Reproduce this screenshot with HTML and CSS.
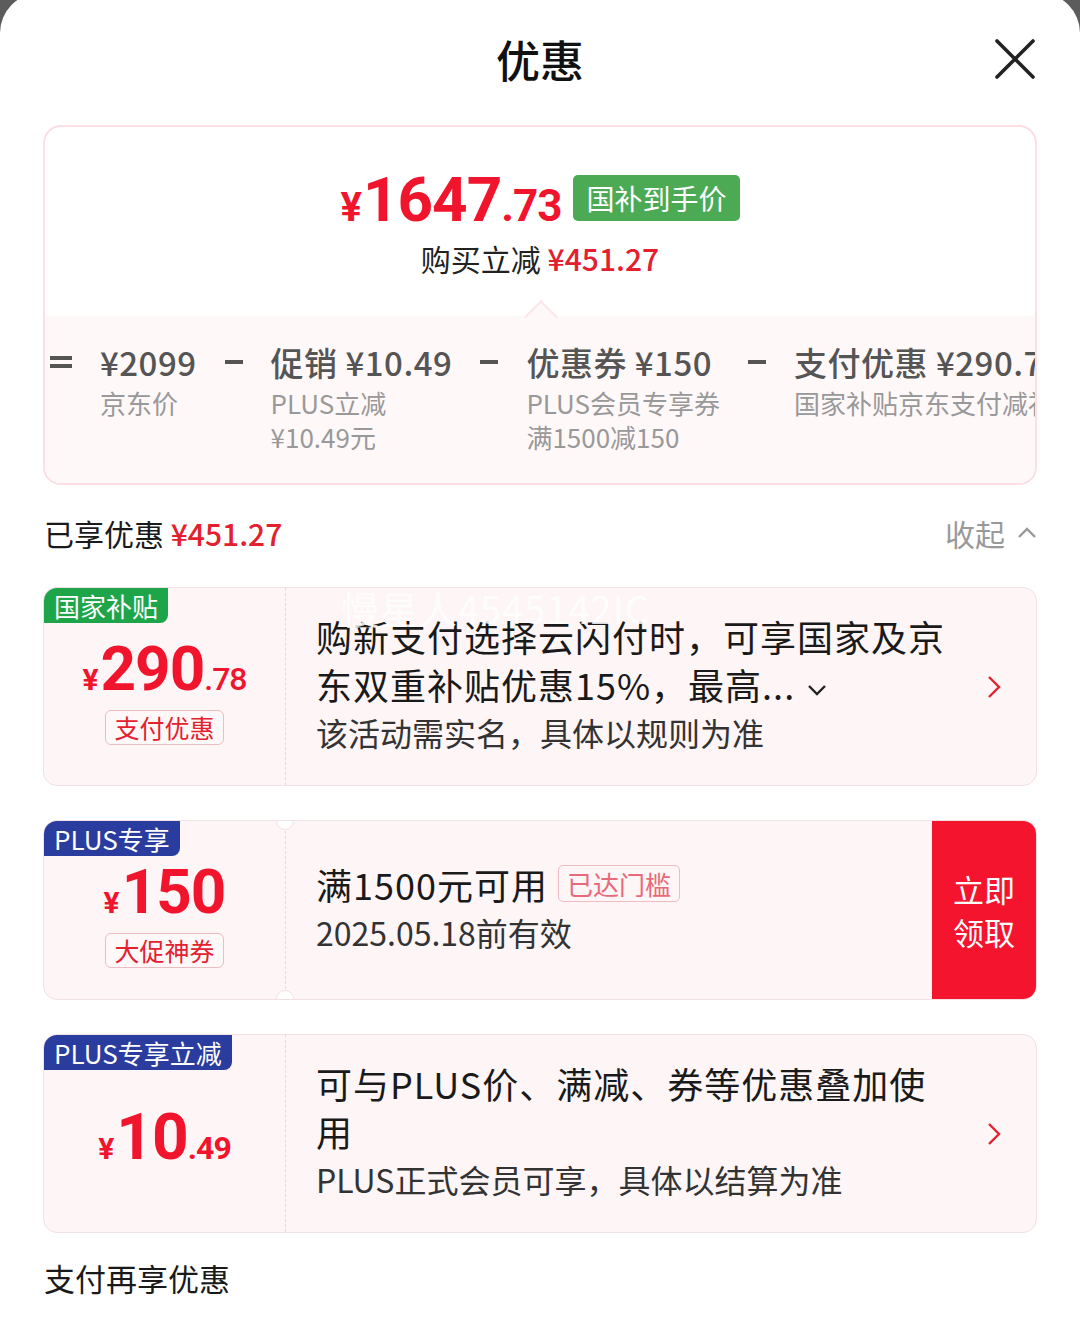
FILE: index.html
```html
<!DOCTYPE html>
<html lang="zh-CN">
<head>
    <meta charset="UTF-8">
    <meta name="viewport" content="width=device-width, initial-scale=1.0">
    <title>优惠</title>
    <link rel="stylesheet" href="styles.css">
</head>
<body>

<div class="sheet">

    <header class="head">
        <span></span>
        <h1>优惠</h1>
        <svg class="close" width="40" height="40" viewBox="0 0 40 40">
            <path d="M2 2 L38 38 M38 2 L2 38" stroke="#222" stroke-width="3.6" fill="none" stroke-linecap="round"/>
        </svg>
    </header>

    <section class="summary">
        <div class="summary-top">
            <div class="final">
                <span class="num"><span class="y">¥</span><span class="i">1647</span><span class="d">.73</span></span>
                <span class="badge-green">国补到手价</span>
            </div>
            <div class="saved">购买立减 <em>¥451.27</em></div>
        </div>
        <div class="summary-bottom">
            <div class="calc">
                <span class="op-eq"></span>
                <div class="term">
                    <div class="term-main">¥2099</div>
                    <div class="term-sub">京东价</div>
                </div>
                <span class="op-minus"></span>
                <div class="term">
                    <div class="term-main">促销 ¥10.49</div>
                    <div class="term-sub">PLUS立减</div>
                    <div class="term-sub">¥10.49元</div>
                </div>
                <span class="op-minus"></span>
                <div class="term">
                    <div class="term-main">优惠券 ¥150</div>
                    <div class="term-sub">PLUS会员专享券</div>
                    <div class="term-sub">满1500减150</div>
                </div>
                <span class="op-minus"></span>
                <div class="term">
                    <div class="term-main">支付优惠 ¥290.78</div>
                    <div class="term-sub">国家补贴京东支付减补</div>
                </div>
            </div>
        </div>
    </section>

    <div class="enjoyed">
        <div class="enjoyed-title">已享优惠 <em>¥451.27</em></div>
        <div class="fold">收起
            <svg width="20" height="12" viewBox="0 0 20 12"><path d="M2 10 L10 2 L18 10" stroke="#999" stroke-width="2.4" fill="none"/></svg>
        </div>
    </div>

    <div class="list">

        <div class="coupon coupon-tall">
            <span class="flag flag-green">国家补贴</span>
            <span class="watermark">慢星人4545142IC</span>
            <div class="c-left">
                <div class="amount"><span class="y">¥</span><span class="i">290</span><span class="d">.78</span></div>
                <span class="tag">支付优惠</span>
            </div>
            <div class="c-body">
                <div class="c-title">购新支付选择云闪付时，可享国家及京东双重补贴优惠15%，最高...<svg class="more-down" width="20" height="12" viewBox="0 0 20 12"><path d="M2 2 L10 10 L18 2" stroke="#222" stroke-width="2.4" fill="none"/></svg></div>
                <div class="c-sub">该活动需实名，具体以规则为准</div>
            </div>
            <div class="c-arrow">
                <svg width="14" height="24" viewBox="0 0 14 24"><path d="M2 2 L12 12 L2 22" stroke="#e3212f" stroke-width="2.4" fill="none"/></svg>
            </div>
        </div>

        <div class="coupon coupon-short">
            <span class="flag flag-navy">PLUS专享</span>
            <div class="c-left c-left-notch">
                <div class="amount"><span class="y">¥</span><span class="i">150</span></div>
                <span class="tag">大促神券</span>
            </div>
            <div class="c-body">
                <div class="c-title">满1500元可用<span class="tag-light">已达门槛</span></div>
                <div class="c-sub">2025.05.18前有效</div>
            </div>
            <div class="c-btn">立即<br>领取</div>
        </div>

        <div class="coupon coupon-tall">
            <span class="flag flag-navy">PLUS专享立减</span>
            <div class="c-left">
                <div class="amount amount-bold"><span class="y">¥</span><span class="i">10</span><span class="d">.49</span></div>
            </div>
            <div class="c-body">
                <div class="c-title">可与PLUS价、满减、券等优惠叠加使用</div>
                <div class="c-sub">PLUS正式会员可享，具体以结算为准</div>
            </div>
            <div class="c-arrow">
                <svg width="14" height="24" viewBox="0 0 14 24"><path d="M2 2 L12 12 L2 22" stroke="#e3212f" stroke-width="2.4" fill="none"/></svg>
            </div>
        </div>

    </div>

    <div class="more">支付再享优惠</div>

</div>

</body>
</html>
```

FILE: styles.css
```css
* {
    box-sizing: border-box;
}

body {
    margin: 0;
    background-color: #5c5c5c;
    font-family: "Noto Sans CJK SC", "Noto Sans", sans-serif;
    color: #1a1a1a;
    overflow: hidden;
}

em {
    font-style: normal;
}

.sheet {
    margin-top: -7px;
    background: #fff;
    border-radius: 40px 40px 0 0;
    min-height: 1340px;
}

.head {
    height: 132px;
    display: grid;
    grid-template-columns: 1fr auto 1fr;
    align-items: center;
}

.head h1 {
    margin: 0;
    font-size: 44px;
    font-weight: 500;
    color: #111;
}

.close {
    justify-self: end;
    margin-right: 45px;
}

/* summary card */
.summary {
    margin: 0 43px;
    border: 2px solid #fbdfe5;
    border-radius: 18px;
    overflow: hidden;
}

.summary-top {
    height: 189px;
    padding-top: 42px;
    text-align: center;
}

.final {
    display: flex;
    justify-content: center;
    align-items: center;
}

.num {
    display: inline-flex;
    align-items: baseline;
    font-family: Roboto, "Noto Sans", sans-serif;
    font-weight: 700;
    color: #f0142c;
    line-height: 1;
    letter-spacing: -1px;
}

.num .y {
    font-size: 40px;
    margin-right: 2px;
}

.num .i {
    font-size: 62px;
}

.num .d {
    font-size: 44px;
}

.badge-green {
    margin-left: 12px;
    margin-bottom: 4px;
    background: #4caa55;
    color: #fff;
    font-size: 28px;
    line-height: 46px;
    padding: 0 13px;
    border-radius: 5px;
}

.saved {
    margin-top: 7px;
    font-size: 30px;
    line-height: 40px;
    color: #222;
}

.saved em {
    color: #e4202f;
    font-weight: 500;
}

.summary-bottom {
    position: relative;
    height: 167px;
    background: #fff8f9;
    padding: 24px 0 0 5px;
}

.summary-bottom::before {
    content: "";
    position: absolute;
    top: -11px;
    left: calc(50% - 11px);
    width: 22px;
    height: 22px;
    background: #fff8f9;
    border-top: 2px solid #fde6ea;
    border-left: 2px solid #fde6ea;
    transform: rotate(45deg);
}

.calc {
    display: flex;
    gap: 28px;
    white-space: nowrap;
}

.op-eq {
    flex: none;
    width: 22px;
    height: 12px;
    margin-top: 16px;
    border-top: 4px solid #555;
    border-bottom: 4px solid #555;
}

.op-minus {
    flex: none;
    width: 18px;
    height: 4px;
    margin-top: 20px;
    background: #555;
}

.term {
    flex: none;
}

.term-main {
    font-size: 33px;
    line-height: 44px;
    font-weight: 500;
    letter-spacing: 0.5px;
    color: #555;
}

.term-sub {
    font-size: 26px;
    line-height: 34px;
    color: #999;
}

.term-main + .term-sub {
    margin-top: 2px;
}

/* enjoyed row */
.enjoyed {
    display: flex;
    justify-content: space-between;
    align-items: center;
    height: 40px;
    margin: 28px 43px 34px 44px;
}

.enjoyed-title {
    font-size: 30px;
    color: #1a1a1a;
}

.enjoyed-title em {
    color: #e4202f;
    font-weight: 500;
}

.fold {
    display: flex;
    align-items: center;
    gap: 12px;
    font-size: 30px;
    color: #999;
}

/* coupons */
.list {
    display: flex;
    flex-direction: column;
    gap: 34px;
    margin: 0 43px;
}

.coupon {
    position: relative;
    display: flex;
    background: #fdf5f6;
    border: 1px solid #f1e1e4;
    border-radius: 14px;
    overflow: hidden;
}

.coupon-tall {
    height: 199px;
}

.coupon-short {
    height: 180px;
}

.flag {
    position: absolute;
    top: 0;
    left: 0;
    z-index: 2;
    color: #fff;
    font-size: 26px;
    line-height: 35px;
    padding: 0 10px;
    border-radius: 0 0 8px 0;
}

.flag-green {
    background: #1ea54a;
}

.flag-navy {
    background: #2a3c9e;
}

.watermark {
    position: absolute;
    top: 0;
    left: 297px;
    font-size: 38px;
    line-height: 40px;
    color: rgba(255, 255, 255, 0.85);
    letter-spacing: 1px;
    z-index: 2;
}

.c-left {
    position: relative;
    flex: none;
    width: 242px;
    border-right: 1px dashed #f3d5da;
    display: flex;
    flex-direction: column;
    align-items: center;
    justify-content: center;
    padding-top: 9px;
}

.c-left-notch::before,
.c-left-notch::after {
    content: "";
    position: absolute;
    right: -9px;
    width: 16px;
    height: 16px;
    border-radius: 50%;
    background: #fff;
    border: 1px solid #f1e1e4;
}

.c-left-notch::before {
    top: -9px;
}

.c-left-notch::after {
    bottom: -9px;
}

.amount {
    display: flex;
    align-items: baseline;
    font-family: Roboto, "Noto Sans", sans-serif;
    font-weight: 700;
    color: #f0142c;
    line-height: 1;
    letter-spacing: -1px;
}

.amount .y {
    font-size: 30px;
    margin-right: 3px;
}

.amount .i {
    font-size: 62px;
}

.amount .d {
    font-size: 32px;
    font-weight: 500;
}

.amount-bold .i {
    font-size: 64px;
}

.amount-bold .d {
    font-weight: 700;
}

.tag {
    margin-top: 10px;
    border: 1px solid #ebbcc2;
    border-radius: 6px;
    background: #fff8f8;
    color: #e3212f;
    font-size: 25px;
    line-height: 33px;
    padding: 0 8px;
}

.c-body {
    flex: 1;
    padding-left: 30px;
    padding-bottom: 5px;
    display: flex;
    flex-direction: column;
    justify-content: center;
}

.c-title {
    font-size: 36px;
    line-height: 48px;
    letter-spacing: 1px;
    color: #1a1a1a;
    display: flex;
    flex-wrap: wrap;
    align-items: center;
}

.coupon-tall .c-title {
    display: block;
    max-width: 636px;
}

.more-down {
    margin-left: 12px;
    vertical-align: middle;
}

.tag-light {
    margin-left: 10px;
    border: 1px solid #f0bcc3;
    border-radius: 5px;
    color: #e8697a;
    font-size: 26px;
    line-height: 35px;
    padding: 0 8px;
    letter-spacing: 0;
}

.c-sub {
    font-size: 32px;
    line-height: 48px;
    color: #333;
}

.c-arrow {
    flex: none;
    width: 84px;
    display: flex;
    align-items: center;
    justify-content: center;
}

.c-btn {
    flex: none;
    width: 104px;
    background: #f5142d;
    color: #fff;
    font-size: 31px;
    line-height: 43px;
    display: flex;
    align-items: center;
    justify-content: center;
    text-align: center;
}

.more {
    margin: 25px 44px 0;
    font-size: 31px;
    line-height: 40px;
    color: #1a1a1a;
}
```
